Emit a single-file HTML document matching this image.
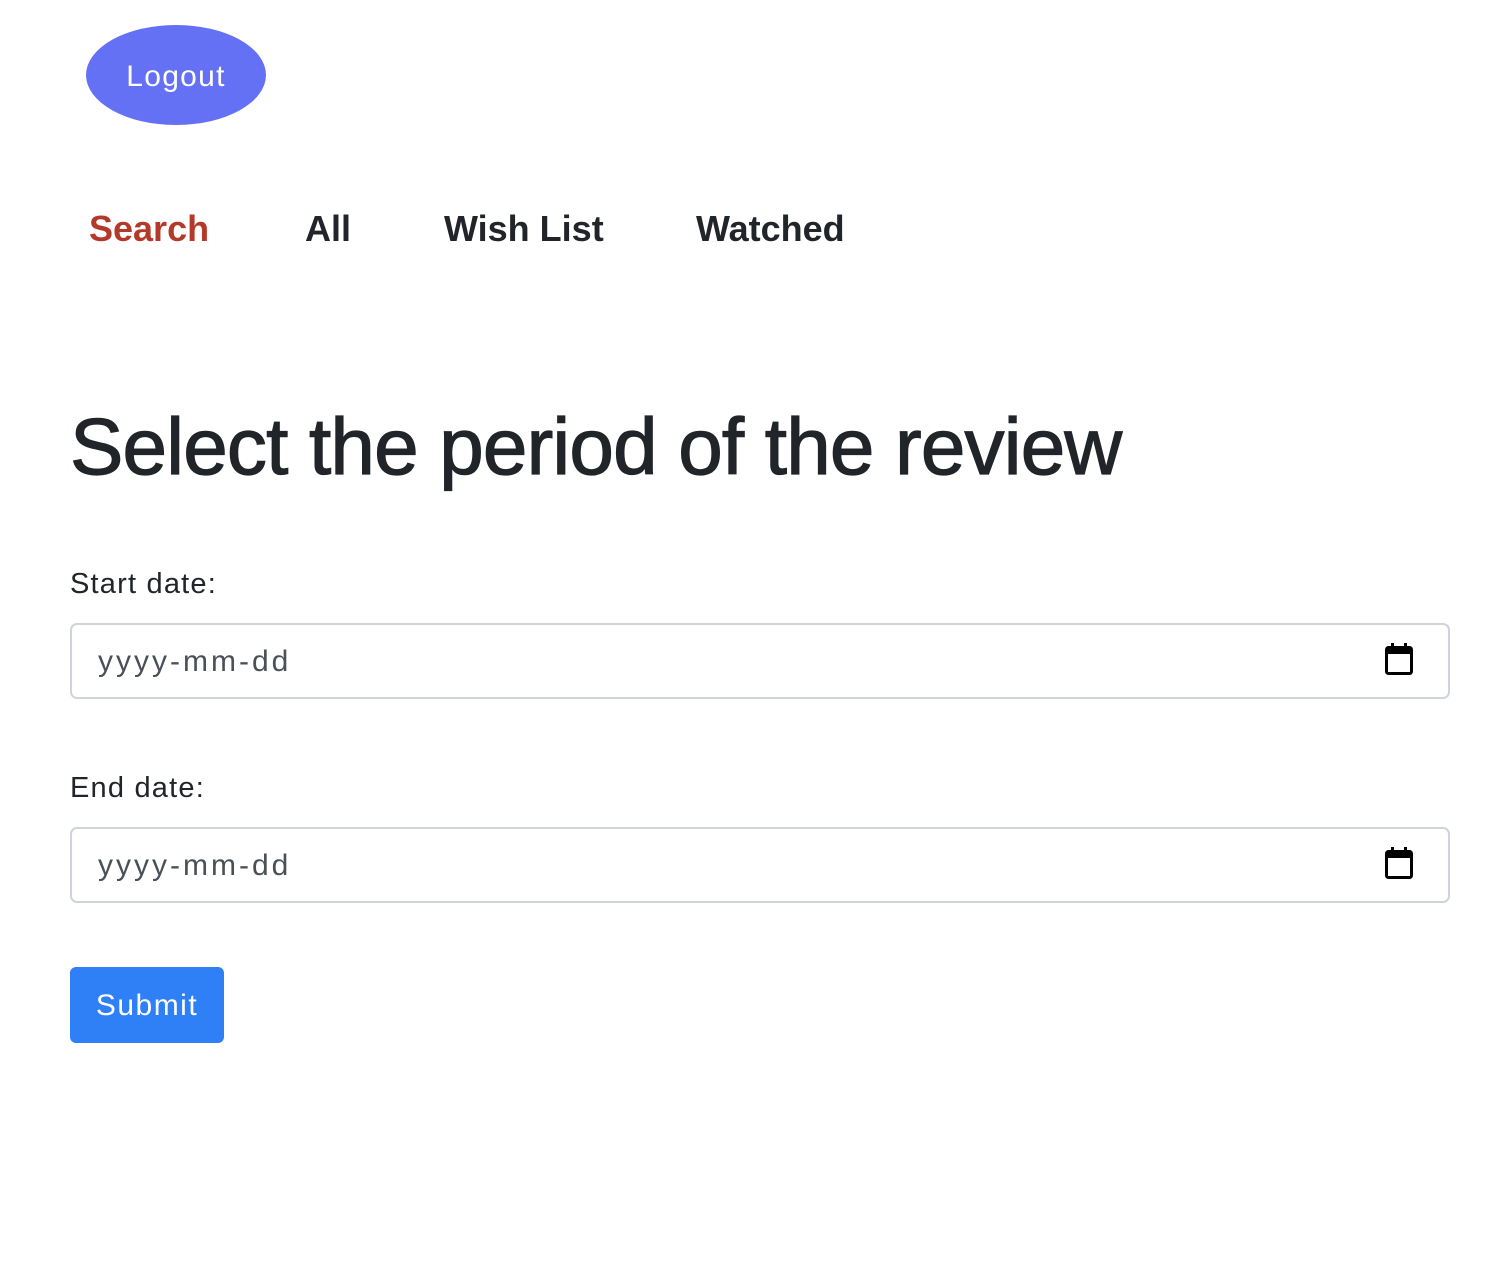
<!DOCTYPE html>
<html><head><style>
body{margin:0;width:1510px;height:1279px;background:#fff;font-family:"Liberation Sans",Arial,sans-serif;position:relative;overflow:hidden;color:#212529}
.a{position:absolute;line-height:1;white-space:nowrap}
.ell{position:absolute;left:86px;top:25px;width:180px;height:100px;border-radius:50%;background:#6571f5}
.nav{font-size:36px;font-weight:bold;color:#212529}
.inp{position:absolute;left:70px;width:1376px;height:72px;border:2px solid #ced4da;border-radius:7px}
.cal{position:absolute;left:1384px}
.ph{font-size:30px;color:#495057;letter-spacing:3px}
.lb{font-size:29px;letter-spacing:1.2px}
</style></head><body>
<div class="ell"></div>
<div class="a" style="left:86px;width:180px;text-align:center;top:62px;font-size:30px;color:#fff;letter-spacing:1.3px">Logout</div>
<div class="a nav" style="left:89px;top:211px;color:#b33a2a">Search</div>
<div class="a nav" style="left:305px;top:211px">All</div>
<div class="a nav" style="left:444px;top:211px">Wish List</div>
<div class="a nav" style="left:696px;top:211px">Watched</div>
<div class="a" style="left:70px;top:407px;font-size:80px;letter-spacing:-0.8px;-webkit-text-stroke:1.2px #212529">Select the period of the review</div>
<div class="a lb" style="left:70px;top:570px">Start date:</div>
<div class="inp" style="top:623px"></div>
<div class="a ph" style="left:98px;top:647px">yyyy-mm-dd</div>
<svg class="cal" style="top:642px" width="30" height="34" viewBox="0 0 30 34"><rect x="2.5" y="5.5" width="25" height="26" rx="2" fill="none" stroke="#000" stroke-width="3"/><rect x="2" y="5" width="26" height="7" fill="#000"/><rect x="7" y="1" width="3" height="6" fill="#000"/><rect x="20" y="1" width="3" height="6" fill="#000"/></svg>
<div class="a lb" style="left:70px;top:774px">End date:</div>
<div class="inp" style="top:827px"></div>
<div class="a ph" style="left:98px;top:851px">yyyy-mm-dd</div>
<svg class="cal" style="top:846px" width="30" height="34" viewBox="0 0 30 34"><rect x="2.5" y="5.5" width="25" height="26" rx="2" fill="none" stroke="#000" stroke-width="3"/><rect x="2" y="5" width="26" height="7" fill="#000"/><rect x="7" y="1" width="3" height="6" fill="#000"/><rect x="20" y="1" width="3" height="6" fill="#000"/></svg>
<div style="position:absolute;left:70px;top:967px;width:154px;height:76px;background:#2f80f7;border-radius:6px"></div>
<div class="a" style="left:70px;width:154px;text-align:center;top:991px;font-size:30px;color:#fff;letter-spacing:1.5px">Submit</div>
</body></html>
